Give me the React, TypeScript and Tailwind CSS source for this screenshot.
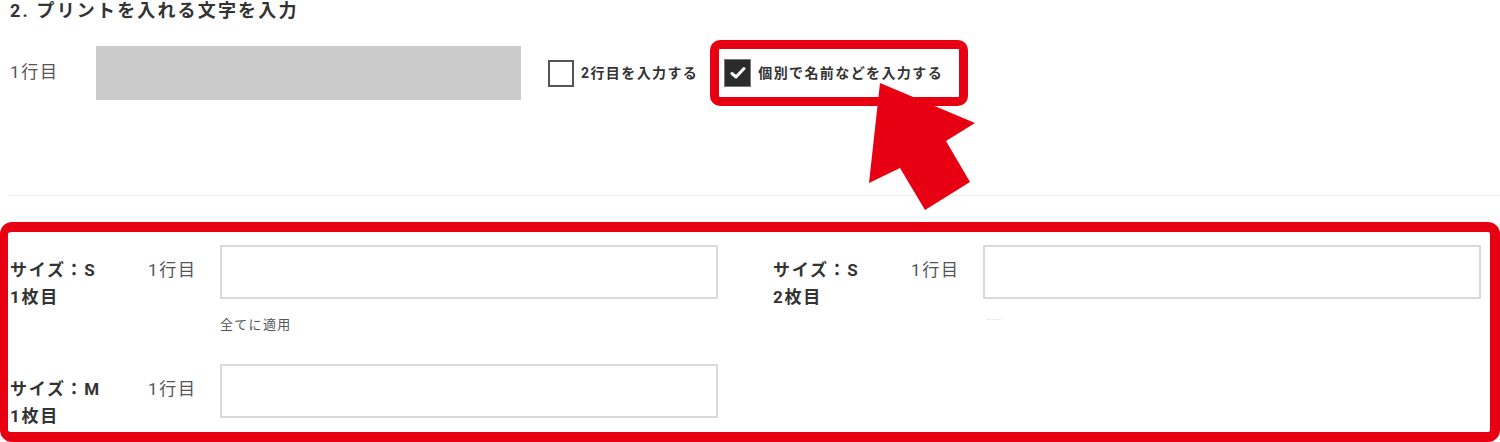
import React from "react";

const rows = [
  { size: "S", no: 1, apply: true },
  { size: "S", no: 2, apply: false },
  { size: "M", no: 1, apply: false },
];

const Cell = ({ size, no, apply }: { size: string; no: number; apply: boolean }) => (
  <div className="flex">
    <div className="w-[138px] pt-[12px] text-[17px] leading-[27px] font-bold tracking-[0.1em] text-[#333]">
      <div>サイズ：{size}</div>
      <div>{no}枚目</div>
    </div>
    <div className="w-[72px] pt-[12px] text-[17px] leading-[27px] tracking-[0.1em] text-[#555]">
      1行目
    </div>
    <div className="w-[498px]">
      <div className="h-[54px] border-2 border-[#dadada] bg-white" />
      {apply ? (
        <p className="mt-[16px] text-[13px] leading-[20px] tracking-[0.1em] text-[#555]">
          全てに適用
        </p>
      ) : (
        no === 2 && <div className="mt-[20px] ml-[3px] h-px w-[16px] bg-[#f0f0f0]" />
      )}
    </div>
  </div>
);

export default function App() {
  return (
    <div className="relative w-[1500px] h-[442px] overflow-hidden bg-white font-['Roboto','Noto_Sans_CJK_JP',sans-serif]">
      {/* Title */}
      <h2 className="pl-[10px] h-[22px] text-[18px] leading-[22px] font-bold tracking-[0.12em] text-[#333]">
        2. プリントを入れる文字を入力
      </h2>

      {/* Line 1 */}
      <div className="mt-[18px] flex items-center">
        <span className="w-[96px] pl-[10px] text-[17px] tracking-[0.1em] text-[#555]">
          1行目
        </span>
        <div className="w-[425px] h-[54px] bg-[#cbcbcb]" />
        <label className="ml-[27px] flex items-center gap-[7px]">
          <span className="w-[26px] h-[27px] border-2 border-[#555] bg-white" />
          <span className="text-[14px] font-bold tracking-[0.1em] text-[#333]">
            2行目を入力する
          </span>
        </label>
        <div className="ml-[12px] h-[66px] flex items-center border-[9px] border-[#e60012] rounded-[10px] pl-[5px] pr-[16px]">
          <label className="flex items-center gap-[7px]">
            <span className="w-[27px] h-[28px] flex items-center justify-center bg-[#2b2b2b] border border-[#777]">
              <svg width="16" height="14" viewBox="0 0 16 14">
                <polyline
                  points="2,7.5 6,11 14,2.5"
                  fill="none"
                  stroke="#fff"
                  strokeWidth="3"
                  strokeLinecap="round"
                  strokeLinejoin="round"
                />
              </svg>
            </span>
            <span className="text-[14px] font-bold tracking-[0.1em] text-[#333]">
              個別で名前などを入力する
            </span>
          </label>
        </div>
      </div>

      {/* Separator */}
      <div className="mt-[89px] ml-[10px] h-px bg-[#eeeeee]" />

      {/* Individual names */}
      <div className="mt-[26px] h-[220px] border-[10px] border-l-[8px] border-[#e60012] rounded-[12px] pt-[13px] pl-[2px]">
        <div className="grid grid-cols-[708px_708px] gap-x-[55px] gap-y-[29px]">
          {rows.map((r, i) => (
            <Cell key={i} size={r.size} no={r.no} apply={r.apply} />
          ))}
        </div>
      </div>

      {/* Arrow */}
      <svg
        className="absolute left-[860px] top-[75px] pointer-events-none"
        width="125"
        height="145"
        viewBox="860 75 125 145"
      >
        <polygon
          points="880,83 975,123 946,141 970,182 925,210 900,168 869,183"
          fill="#e60012"
        />
      </svg>
    </div>
  );
}
